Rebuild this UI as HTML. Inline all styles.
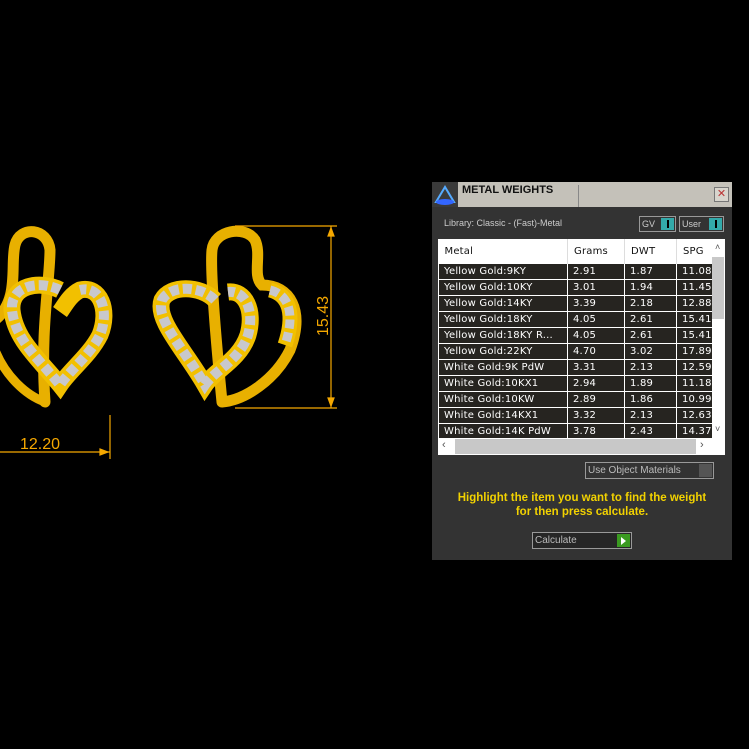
<!DOCTYPE html>
<html><head><style>
body{margin:0;width:749px;height:749px;background:#000;overflow:hidden;position:relative;font-family:"Liberation Sans",sans-serif}
.p{position:absolute;left:432px;top:182px;width:300px;height:378px;background:#333}
.tb{position:absolute;left:0;top:0;width:300px;height:25px;background:#c4c1b9}
.tb .ic{position:absolute;left:0;top:0;width:26px;height:25px;background:#3a3a3a}
.tb .t{position:absolute;left:30px;top:2px;font:bold 11px "Liberation Sans",sans-serif;color:#111}
.tb .sep{position:absolute;left:146px;top:3px;width:1px;height:22px;background:#888}
.tb .x{position:absolute;left:282px;top:5px;width:13px;height:13px;border:1px solid #777;background:#d8d5cd;color:#b33;font-size:11px;line-height:12px;text-align:center}
.lib{position:absolute;left:12px;top:36px;font-size:9px;color:#ccc}
.tg{position:absolute;top:34px;height:16px;border:1px solid #999;font-size:9px;color:#ccc;line-height:15px;padding-left:2px;box-sizing:border-box}
.tg i{position:absolute;right:1px;top:1px;width:13px;height:12px;background:#3aa;}
.tg i:after{content:"";position:absolute;left:6px;top:2px;width:2px;height:8px;background:#000}
.tbl{position:absolute;left:6px;top:57px;width:287px;height:216px;background:#fff;overflow:hidden}
table{position:absolute;left:0;top:0;border-collapse:collapse;table-layout:fixed;width:274px;font:10px "DejaVu Sans",sans-serif;letter-spacing:0.2px}
td{height:15px;padding:0 0 0 5px;border:1px solid #fff;background:#262420;color:#fff;white-space:nowrap;overflow:hidden}
th{height:22px;text-align:left;font-weight:normal;padding-left:6px;border-right:1px solid #ddd;color:#111;background:#fff;overflow:hidden;white-space:nowrap}
.vs{position:absolute;left:274px;top:0;width:13px;height:199px;background:#fff}
.th{position:absolute;left:274px;top:18px;width:12px;height:62px;background:#c8c8c8}
.hs{position:absolute;left:0;top:199px;width:287px;height:17px;background:#fff}
.hs div{position:absolute;left:17px;top:1px;width:241px;height:15px;background:#c8c8c8}
.uom{position:absolute;left:153px;top:280px;width:129px;height:17px;border:1px solid #999;font-size:10px;color:#bbb;line-height:16px;padding-left:2px;box-sizing:border-box}
.uom i{position:absolute;right:1px;top:1px;width:13px;height:13px;background:#555}
.msg{position:absolute;left:0;top:309px;width:300px;text-align:center;color:#f2d200;font:bold 11.5px "Liberation Sans",sans-serif;line-height:14px}
.calc{position:absolute;left:100px;top:350px;width:100px;height:17px;border:1px solid #999;font-size:10px;color:#bbb;line-height:16px;padding-left:2px;box-sizing:border-box;background:#262626}
.calc i{position:absolute;right:1px;top:1px;width:13px;height:13px;background:#3a9a20}
.calc i:after{content:"";position:absolute;left:4px;top:3px;border-left:5px solid #fff;border-top:4px solid transparent;border-bottom:4px solid transparent}
</style></head><body>
<svg width="430" height="749" style="position:absolute;left:0;top:0">
<g fill="none" stroke-linecap="butt">
<path d="M45 402 C40 330 50 280 50 250 C48 228 20 225 15 245 C10 265 20 300 -5 320" stroke="#e8b000" stroke-width="11" stroke-linecap="round"/>
<path d="M45 402 C25 395 5 375 -5 350" stroke="#e8b000" stroke-width="9"/>
<path d="M60 290 C40 280 10 285 12 310 C15 340 40 360 60 385 C70 370 90 355 100 335 C110 310 100 285 80 290 C70 295 65 305 60 312" stroke="#f2c000" stroke-width="17"/>
<path d="M60 290 C40 280 10 285 12 310 C15 340 40 360 60 385 C70 370 90 355 100 335 C110 310 100 285 80 290" stroke="#c8c8cc" stroke-width="10" stroke-dasharray="9 4"/>
<path d="M222 402 C215 330 210 270 212 250 C214 230 245 225 255 240 C262 255 252 275 262 285 C290 285 305 310 290 350 C275 380 245 400 222 402" stroke="#e8b000" stroke-width="11" stroke-linecap="round"/>
<path d="M215 300 C200 285 170 285 162 300 C155 320 185 350 205 385 C215 370 240 360 248 335 C255 310 245 290 228 292" stroke="#f2c000" stroke-width="17"/>
<path d="M215 300 C200 285 170 285 162 300 C155 320 185 350 205 385 C215 370 240 360 248 335 C255 310 245 290 228 292" stroke="#c8c8cc" stroke-width="10" stroke-dasharray="9 4"/>
<path d="M270 290 C290 295 295 315 285 345" stroke="#f2c000" stroke-width="15"/>
<path d="M270 290 C290 295 295 315 285 345" stroke="#c8c8cc" stroke-width="9" stroke-dasharray="9 4"/>
</g>
<g stroke="#f5a800" stroke-width="1.2" fill="#f5a800">
<line x1="235" y1="226" x2="337" y2="226"/><line x1="235" y1="408" x2="337" y2="408"/>
<line x1="331" y1="226" x2="331" y2="408"/>
<path d="M331 228 l-3 8 h6z M331 406 l-3 -8 h6z"/>
<line x1="110" y1="415" x2="110" y2="459"/><line x1="0" y1="452" x2="110" y2="452"/>
<path d="M108 452 l-8 -3 v6z"/>
</g>
<text x="20" y="449" fill="#f5a800" font-family="Liberation Sans" font-size="16">12.20</text>
<text transform="translate(328 336) rotate(-90)" fill="#f5a800" font-family="Liberation Sans" font-size="16">15.43</text>
</svg>
<div class="p">
<div class="tb"><div class="ic"><svg width="26" height="25"><path d="M4 20 L13 5 L22 20 Z" fill="none" stroke="#5af" stroke-width="2"/><ellipse cx="13" cy="20" rx="9" ry="3" fill="#36f"/></svg></div><div class="t">METAL WEIGHTS</div><div class="sep"></div><div class="x">✕</div></div>
<div class="lib">Library: Classic - (Fast)-Metal</div>
<div class="tg" style="left:207px;width:37px">GV<i></i></div>
<div class="tg" style="left:247px;width:45px">User<i></i></div>
<div class="tbl">
<table>
<colgroup><col style="width:129px"><col style="width:57px"><col style="width:52px"><col style="width:36px"></colgroup>
<tr><th>Metal</th><th>Grams</th><th>DWT</th><th>SPG</th></tr>
<tr><td>Yellow Gold:9KY</td><td>2.91</td><td>1.87</td><td>11.08</td></tr>
<tr><td>Yellow Gold:10KY</td><td>3.01</td><td>1.94</td><td>11.45</td></tr>
<tr><td>Yellow Gold:14KY</td><td>3.39</td><td>2.18</td><td>12.88</td></tr>
<tr><td>Yellow Gold:18KY</td><td>4.05</td><td>2.61</td><td>15.41</td></tr>
<tr><td>Yellow Gold:18KY R...</td><td>4.05</td><td>2.61</td><td>15.41</td></tr>
<tr><td>Yellow Gold:22KY</td><td>4.70</td><td>3.02</td><td>17.89</td></tr>
<tr><td>White Gold:9K PdW</td><td>3.31</td><td>2.13</td><td>12.59</td></tr>
<tr><td>White Gold:10KX1</td><td>2.94</td><td>1.89</td><td>11.18</td></tr>
<tr><td>White Gold:10KW</td><td>2.89</td><td>1.86</td><td>10.99</td></tr>
<tr><td>White Gold:14KX1</td><td>3.32</td><td>2.13</td><td>12.63</td></tr>
<tr><td>White Gold:14K PdW</td><td>3.78</td><td>2.43</td><td>14.37</td></tr>
</table>
<div class="vs"><span style="position:absolute;left:3px;top:3px;font-size:9px;color:#555">˄</span><span style="position:absolute;left:3px;top:185px;font-size:9px;color:#555">˅</span></div>
<div class="th"></div>
<div class="hs"><span style="position:absolute;left:4px;top:1px;font-size:11px;color:#555">‹</span><div></div><span style="position:absolute;left:262px;top:1px;font-size:11px;color:#555">›</span></div>
</div>
<div class="uom">Use Object Materials<i></i></div>
<div class="msg">Highlight the item you want to find the weight<br>for then press calculate.</div>
<div class="calc">Calculate<i></i></div>
</div>
</body></html>
